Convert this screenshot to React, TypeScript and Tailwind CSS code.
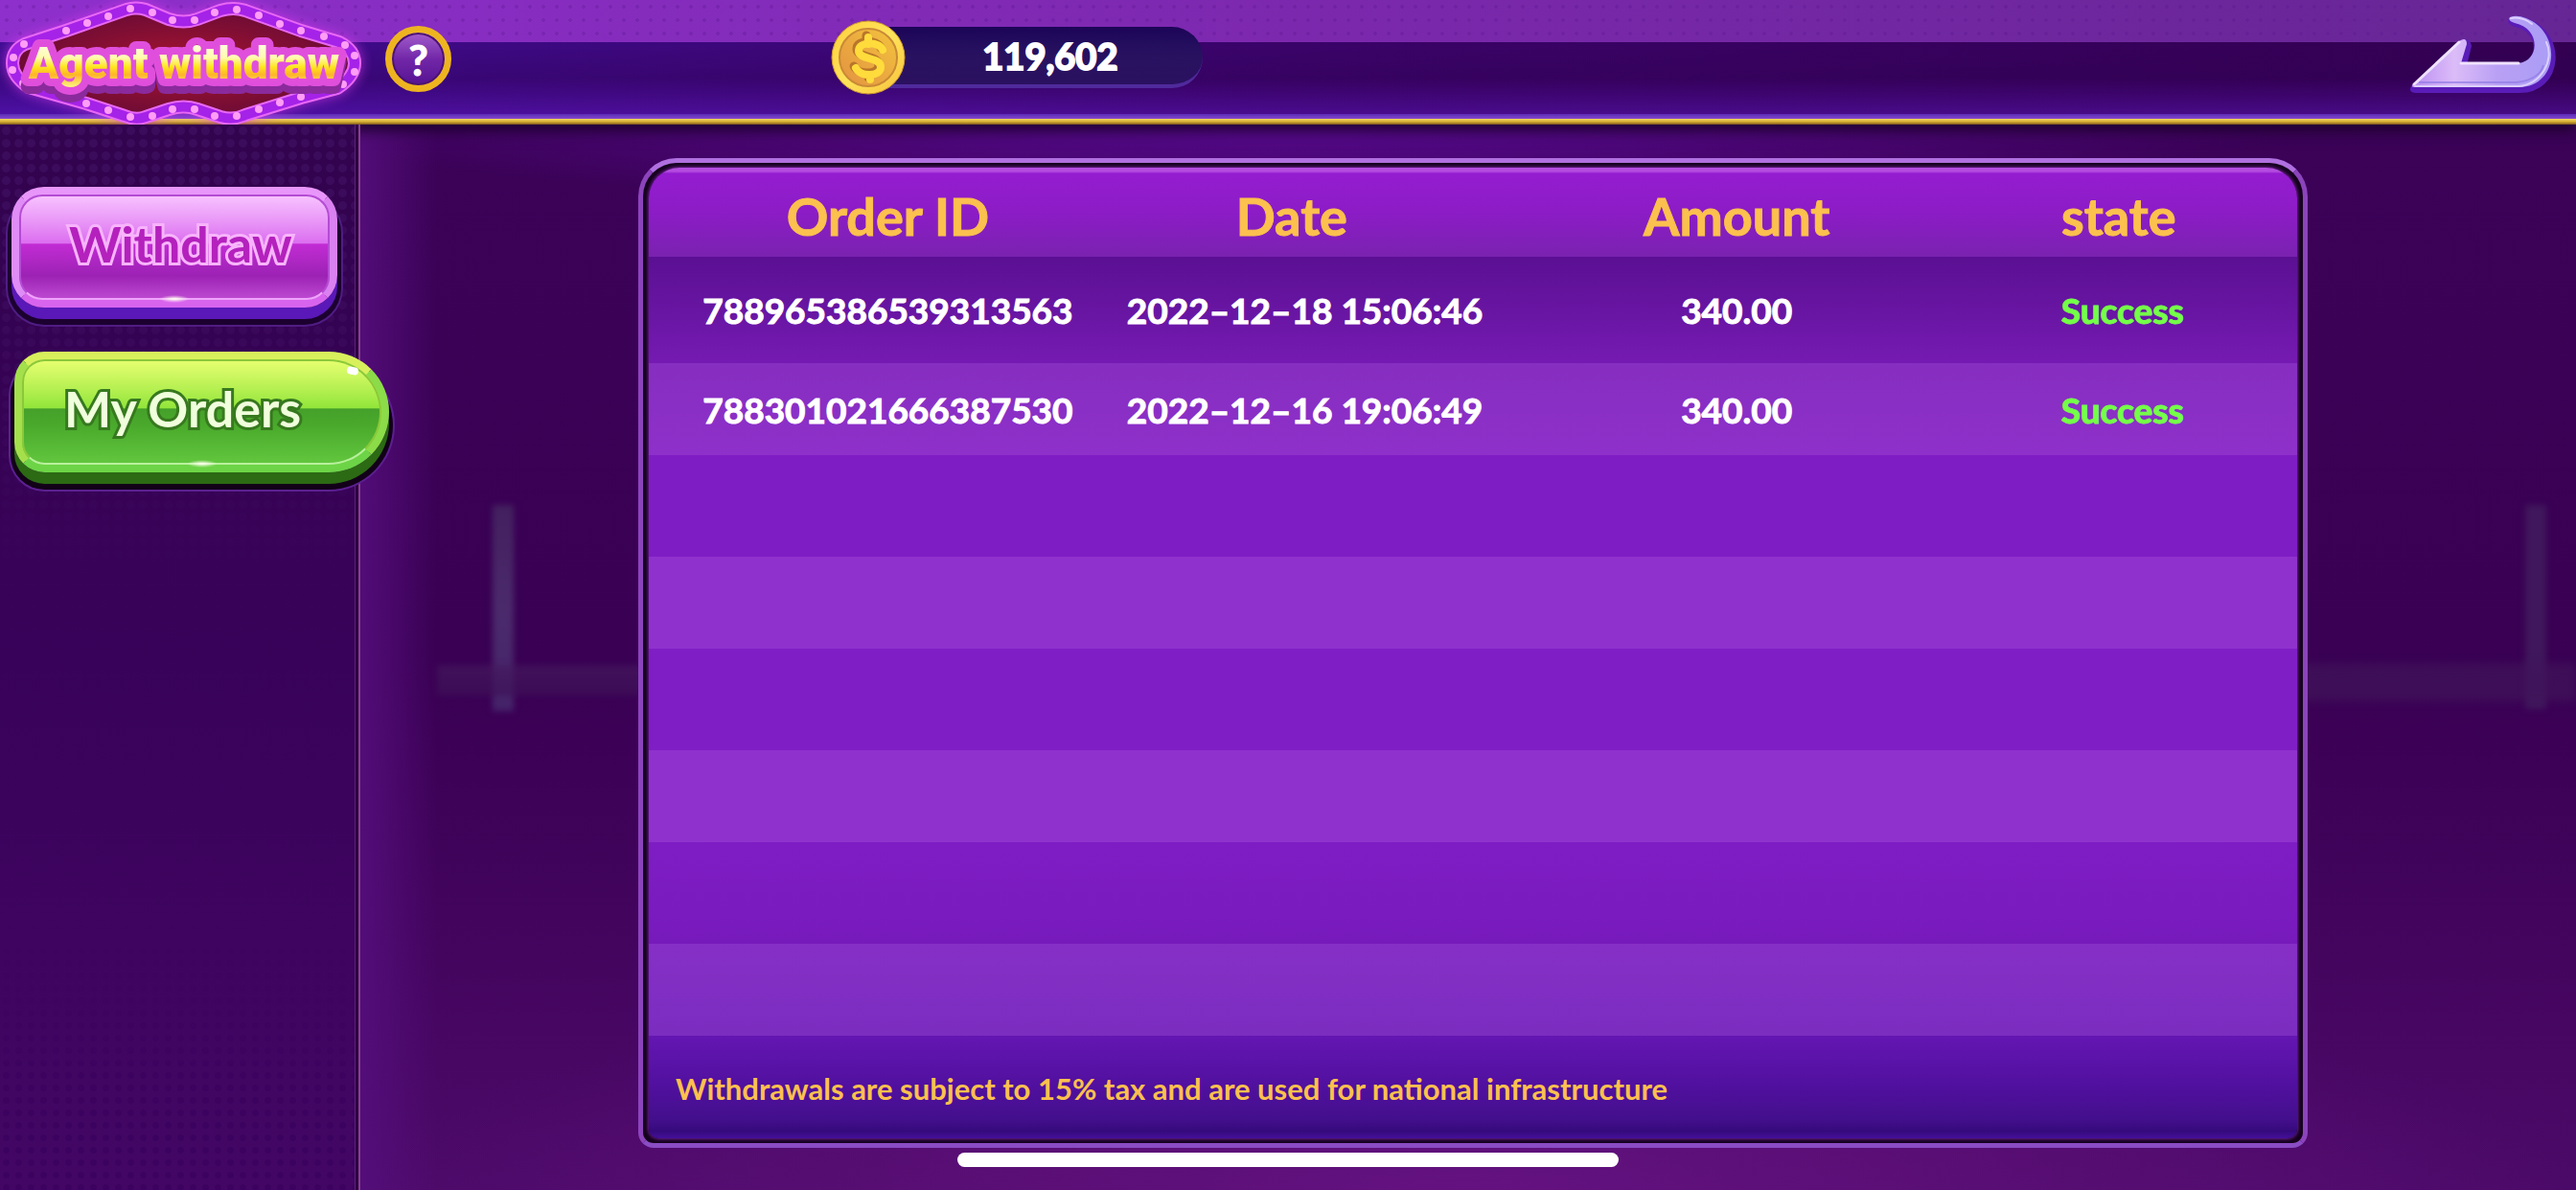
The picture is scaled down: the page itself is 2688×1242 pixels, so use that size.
import type { ReactNode } from 'react'
import { clsx } from 'clsx'

interface Order {
  id: string
  date: string
  amount: string
  state: string
}

const orders: Order[] = [
  { id: '788965386539313563', date: '2022–12–18 15:06:46', amount: '340.00', state: 'Success' },
  { id: '788301021666387530', date: '2022–12–16 19:06:49', amount: '340.00', state: 'Success' },
]

const ROW_STYLES = [
  'h-[111px] bg-linear-to-b from-[#5b1093] to-[#751ab2]',
  'h-24 bg-linear-to-b from-[#862ec0] to-[#8e30ca]',
  'h-[106px] bg-[#7f1dc4]',
  'h-24 bg-[#8f32cd]',
  'h-[106px] bg-[#801ec6]',
  'h-24 bg-[#8f32cd]',
  'h-[106px] bg-linear-to-b from-[#7e1dc4] to-[#771abc]',
  'h-24 bg-linear-to-b from-[#862fc6] to-[#7b2dc0]',
]

// bulbs along the sign's frame
const BULBS = [
  [14, 60], [13, 73], [24, 87], [25, 46], [69, 32], [91, 24], [113, 17], [136, 9], [159, 13], [180, 21], [203, 21],
  [224, 13], [247, 10], [270, 16], [292, 25], [314, 32], [338, 38], [360, 47], [370, 58], [370, 75], [358, 88],
  [90, 108], [113, 115], [136, 122], [159, 121], [180, 114], [203, 114], [224, 121], [247, 121], [270, 114],
  [292, 107], [314, 101],
]

const FRAME =
  'M26 46 L69 32 L132 10 Q142 7 152 10 L176 20 Q192 25 206 20 L230 11 Q244 7 256 11 L314 32 L354 44 Q370 52 370 66 Q370 80 352 92 L314 102 L256 120 Q243 126 230 122 L206 114 Q192 109 176 114 L152 122 Q142 126 130 121 L90 108 L30 91 Q13 80 13 66 Q13 52 26 46 Z'

function Sign() {
  return (
    <h1 className="shrink-0">
      <svg width="384" height="132" viewBox="0 0 384 132" className="block overflow-visible">
        <defs>
          <linearGradient id="sign-text" x1="0" y1="40" x2="0" y2="90" gradientUnits="userSpaceOnUse">
            <stop offset="0" stopColor="#fffef0" />
            <stop offset="0.4" stopColor="#fffbb0" />
            <stop offset="0.6" stopColor="#ffe61c" />
            <stop offset="0.76" stopColor="#ffb42a" />
            <stop offset="1" stopColor="#fff27a" />
          </linearGradient>
          <radialGradient id="sign-back">
            <stop offset="0" stopColor="#a81430" />
            <stop offset="1" stopColor="#6c0b35" />
          </radialGradient>
          <filter id="sign-glow" x="-10%" y="-20%" width="120%" height="140%">
            <feGaussianBlur stdDeviation="6" />
          </filter>
        </defs>
        <path d={FRAME} fill="none" stroke="#d838f0" strokeWidth="16" opacity="0.6" filter="url(#sign-glow)" />
        <path d={FRAME} fill="url(#sign-back)" stroke="#e868f4" strokeWidth="14" strokeLinejoin="round" />
        <path d={FRAME} fill="none" stroke="#a522e8" strokeWidth="10" strokeLinejoin="round" />
        {BULBS.map(([x, y]) => (
          <circle key={`${x}-${y}`} cx={x} cy={y} r="4" fill="#ff9df6" />
        ))}
        <text
          x="192"
          y="82"
          fontFamily="Roboto, 'Liberation Sans', sans-serif"
          fontWeight="900"
          fontSize="46"
          textAnchor="middle"
          fill="url(#sign-text)"
          stroke="#e04fdc"
          strokeWidth="16"
          strokeLinejoin="round"
          className="drop-shadow-[0_8px_0_#8a2a9c] [paint-order:stroke_fill]"
        >
          Agent withdraw
        </text>
      </svg>
    </h1>
  )
}

function Coin() {
  return (
    <svg width="78" height="78" viewBox="0 0 78 78" className="shrink-0" aria-hidden="true">
      <defs>
        <linearGradient id="coin-rim" x1="0" y1="0" x2="1" y2="1">
          <stop offset="0" stopColor="#ffcf3e" />
          <stop offset="0.5" stopColor="#ffe35a" />
          <stop offset="1" stopColor="#f7c23c" />
        </linearGradient>
        <linearGradient id="coin-face" x1="0" y1="1" x2="1" y2="0">
          <stop offset="0" stopColor="#e39142" />
          <stop offset="1" stopColor="#f3c43d" />
        </linearGradient>
      </defs>
      <circle cx="39" cy="39" r="38" fill="url(#coin-rim)" stroke="#d09a2c" strokeWidth="1" />
      <circle cx="39" cy="39" r="30" fill="url(#coin-face)" stroke="#c98a36" strokeWidth="2" />
      <path
        d="M53 30 C49 21 28 21 28 31 C28 41 51 37 51 48 C51 58 30 59 25 49 M38 17 V24 M40 56 V61"
        fill="none"
        stroke="#b9762a"
        strokeWidth="9"
        strokeLinecap="round"
        transform="translate(-1 -1)"
      />
      <path
        d="M53 30 C49 21 28 21 28 31 C28 41 51 37 51 48 C51 58 30 59 25 49 M38 17 V24 M40 56 V61"
        fill="none"
        stroke="#ffdc3c"
        strokeWidth="8"
        strokeLinecap="round"
        transform="translate(1 1)"
      />
    </svg>
  )
}

function BackArrow() {
  return (
    <svg width="156" height="84" viewBox="72 14 156 84" className="block" aria-hidden="true">
      <defs>
        <linearGradient id="arrow" x1="76" y1="0" x2="226" y2="0" gradientUnits="userSpaceOnUse">
          <stop offset="0" stopColor="#b98cf2" />
          <stop offset="0.3" stopColor="#dcbcf8" />
          <stop offset="0.6" stopColor="#b9a0f4" />
          <stop offset="1" stopColor="#a99cf6" />
        </linearGradient>
      </defs>
      <path
        d="M77 89 L126 43 Q134 38 136 46 L131 66 L188 66 C210 64 212 30 184 24 Q176 22 179 18 Q186 15 196 19 C236 34 232 93 188 93 L80 93 Q74 93 77 89 Z"
        fill="#5a1cb8"
        stroke="#5a1cb8"
        strokeWidth="4"
        strokeLinejoin="round"
        transform="translate(1 2)"
      />
      <path
        d="M77 89 L126 43 Q134 38 134 46 L128 66 L188 66 C210 64 212 30 184 24 Q176 21 179 18 Q186 15 196 19 C234 34 230 91 188 91 L80 91 Q76 91 77 89 Z"
        fill="url(#arrow)"
      />
      <path d="M79 88 L126 44 M128 66 L188 66" fill="none" stroke="#efe2ff" strokeWidth="3" strokeLinecap="round" />
      <path d="M80 90 L188 90 C212 88 226 62 217 44 M180 19 Q192 17 202 25" fill="none" stroke="#dcd0ff" strokeWidth="2" strokeLinecap="round" />
      <path d="M84 86 L186 86 C204 84 212 76 214 68" fill="none" stroke="#8f7ae4" strokeWidth="2" opacity="0.7" />
    </svg>
  )
}

function Header() {
  return (
    <header className="relative z-10 flex h-[130px] items-start bg-linear-to-r from-[#3f0d94] via-[#3a0369] to-[#330052] shadow-[0_6px_14px_#1c002c]">
      <div className="absolute inset-x-0 top-0 h-11 bg-linear-to-r from-[#8e30cc] via-[#7c28ae] to-[#662694]" />
      <div className="absolute inset-x-0 top-0 h-11 bg-[radial-gradient(#5a1490_2px,transparent_2px)] bg-size-[14px_14px] opacity-30" />
      <div className="absolute inset-x-0 top-11 h-[75px] bg-linear-to-b from-transparent via-[#2e0050]/30 to-[#5a14b4]/50" />
      <div className="absolute inset-x-0 top-[119px] h-[5px] bg-linear-to-b from-[#5b2bb4] to-[#8448cc]" />
      <div className="absolute inset-x-0 top-[124px] h-[6px] bg-linear-to-b from-[#f0d860] via-[#d8b030] to-[#7c5420]" />

      <div className="relative flex w-[32.25%] items-start">
        <Sign />
        <button
          type="button"
          aria-label="Help"
          className="mt-[27px] ml-[18px] grid size-[69px] place-items-center rounded-full border-[7px] border-[#eeb420] bg-linear-to-b from-[#a45ccc] via-[#7226a8] to-[#551292] text-[44px] leading-none font-bold text-white shadow-[inset_0_0_0_2px_#4c1272] [-webkit-text-stroke:1px_white]"
        >
          ?
        </button>
      </div>

      <div className="relative mt-[21px] flex w-[390px] items-center">
        <div className="relative z-10">
          <Coin />
        </div>
        <div className="-ml-10 flex h-16 w-[350px] items-center justify-center rounded-r-full border-b-4 border-[#4f2a9c] bg-linear-to-b from-[#1c0558] via-[#281260] to-[#2b1160] pl-8 text-[38px] leading-none font-bold text-white [-webkit-text-stroke:2px_white]">
          119,602
        </div>
      </div>

      <div className="relative flex flex-1 justify-end pt-[14px] pr-5">
        <button type="button" aria-label="Back">
          <BackArrow />
        </button>
      </div>
    </header>
  )
}

function TabButton({ active = false, children }: { active?: boolean; children: ReactNode }) {
  return (
    <button
      type="button"
      aria-pressed={active}
      className={clsx(
        'relative flex h-[126px] items-center border-8 text-left text-[52px] leading-none font-bold [paint-order:stroke_fill]',
        active
          ? 'ml-[3px] w-[391px] rounded-l-[32px] rounded-r-[64px] border-t-[#d8f05c] border-r-[#8bdc48] border-b-[#6cd446] border-l-[#a4e04c] bg-linear-to-b from-[#e8ff70] via-[#94e63c] via-45% to-[#62cc3c] pl-11 text-[#f0ffdc] shadow-[0_12px_0_#2c6a14,0_14px_0_4px_#120018,0_14px_0_6px_#5c2090] [-webkit-text-stroke:6px_#37791f]'
          : 'w-[340px] rounded-[34px] border-t-[#e896fa] border-r-[#da80f0] border-b-[#d864ee] border-l-[#e08cf6] bg-linear-to-b from-[#f8c4ff] via-[#dc70f0] via-45% to-[#bc44d0] pl-[52px] text-[#b421bd] shadow-[0_12px_0_#5a18b8,0_14px_0_4px_#1c0030,0_14px_0_6px_#501c84] [-webkit-text-stroke:6px_#f8b4fc]',
      )}
    >
      <span
        className={clsx(
          'absolute inset-0 border-2',
          active
            ? 'rounded-l-3xl rounded-r-[56px] border-[#8bc83a] border-b-[#b8f09c] bg-[linear-gradient(transparent_46%,#45a02a_47%,#4aaa2c_64%,#62c63e)]'
            : 'rounded-3xl border-[#b44cd4] border-b-[#f0a4fc] bg-[linear-gradient(transparent_46%,#c22cd4_47%,#9c22b4_78%,#bc48d0)]',
        )}
      />
      {/* glint on the lower edge */}
      <span className="absolute bottom-[-3px] left-1/2 h-2 w-8 -translate-x-1/2 rounded-full bg-[radial-gradient(#fffff0,transparent_70%)]" />
      {active && <span className="absolute top-2 right-6 h-2 w-3 rotate-12 rounded-full bg-white" />}
      <span className="relative -mt-2">{children}</span>
    </button>
  )
}

function Sidebar() {
  return (
    <nav className="relative z-10 w-[376px] shrink-0 border-r-2 border-[#87408f] bg-linear-to-b from-[#32034e] via-[#39025a] to-[#430664]">
      <div className="absolute inset-x-0 top-0 h-[500px] bg-[radial-gradient(#4a1a70_4px,transparent_5px)] mask-b-from-10% bg-size-[13px_13px] opacity-40" />
      <div className="absolute inset-x-0 bottom-0 h-64 bg-[radial-gradient(#38005c_3px,transparent_4px)] mask-t-from-40% bg-size-[13px_13px] opacity-50" />
      <div className="absolute inset-y-0 right-0 w-1 border-l border-[#5a2474] bg-[#2c0040]" />
      <div className="relative flex flex-col gap-[46px] pt-[65px] pl-3">
        <TabButton>Withdraw</TabButton>
        <TabButton active>My Orders</TabButton>
      </div>
    </nav>
  )
}

// dim stage lights behind the panel
function Backdrop() {
  return (
    <div className="absolute inset-0 overflow-hidden" aria-hidden="true">
      <div className="absolute inset-y-0 left-0 w-20 bg-linear-to-r from-[#550e7c] to-transparent opacity-90" />
      <div className="absolute inset-x-0 top-0 h-28 bg-[radial-gradient(ellipse_at_42%_0%,#580a90,transparent_55%)]" />
      <div className="absolute inset-x-0 bottom-0 h-60 bg-[radial-gradient(ellipse_at_50%_100%,#641280,transparent_70%)]" />
      <div className="absolute top-[397px] left-[138px] h-[215px] w-[22px] bg-linear-to-b from-[#43205f] via-[#4b2a6c] to-[#45236a] blur-[3px]" />
      <div className="absolute top-[564px] left-20 h-8 w-56 bg-linear-to-b from-[#45195e] to-[#3e1158] opacity-70 blur-[3px]" />
      <div className="absolute top-[397px] right-[31px] h-[213px] w-[22px] bg-[#40175c] blur-[3px]" />
      <div className="absolute top-[562px] right-0 h-10 w-[290px] bg-[#40145a] opacity-70 blur-[4px]" />
    </div>
  )
}

function OrdersPanel() {
  return (
    <section className="relative flex-1 self-start rounded-t-[40px] rounded-b-[16px] border-[5px] border-[#8c44bc] border-t-[#b070e0] border-b-[#8a4cc4] bg-[#14001c] px-[6px] py-[5px]">
      <div className="overflow-hidden rounded-t-[32px] rounded-b-[10px] shadow-[0_0_4px_#a030d8]">
        <table className="w-full table-fixed border-collapse text-center">
          <colgroup>
            <col className="w-[29%]" />
            <col className="w-[20%]" />
            <col className="w-[34%]" />
            <col className="w-[17%]" />
          </colgroup>
          <thead>
            <tr className="h-[93px] bg-[linear-gradient(#b44ce0_0px,#b44ce0_4px,#941dd0_6px,#8c1cc6_50%,#7a22b0)] text-[54px] leading-none text-[#fcc04e] [-webkit-text-stroke:1px_currentColor]">
              <th className="pt-2">Order ID</th>
              <th className="pt-2">Date</th>
              <th className="pt-2">Amount</th>
              <th className="pt-2 pr-20">state</th>
            </tr>
          </thead>
          <tbody className="text-[37px] leading-none font-bold text-white [-webkit-text-stroke:1px_currentColor]">
            {ROW_STYLES.map((rowStyle, i) => {
              const order = orders[i]
              return (
                <tr key={i} className={rowStyle}>
                  <td className="whitespace-nowrap">{order?.id}</td>
                  <td className="whitespace-nowrap">{order?.date}</td>
                  <td>{order?.amount}</td>
                  <td className="pr-[72px] text-[#74ff48]">{order?.state}</td>
                </tr>
              )
            })}
          </tbody>
        </table>
        <p className="flex h-[107px] items-center bg-[linear-gradient(#6416b2,#50109e_50%,#430f8c_82%,#350a7c_93%,#44109a)] pt-1 pl-7 text-[31px] leading-none font-bold text-[#fcc04e]">
          Withdrawals are subject to 15% tax and are used for national infrastructure
        </p>
      </div>
    </section>
  )
}

export default function App() {
  return (
    <div className="relative flex min-h-screen flex-col bg-[#3b0256] font-['Lato','Open_Sans',sans-serif]">
      <Header />
      <div className="flex flex-1">
        <Sidebar />
        <main className="relative flex flex-1 bg-linear-to-b from-[#3b0258] via-[#390053] to-[#4c0a68] pt-[35px] pr-[280px] pb-[43px] pl-[290px]">
          <Backdrop />
          <OrdersPanel />
        </main>
      </div>
      <div className="absolute bottom-6 left-1/2 z-20 h-[15px] w-[690px] -translate-x-1/2 rounded-full bg-white" />
    </div>
  )
}
